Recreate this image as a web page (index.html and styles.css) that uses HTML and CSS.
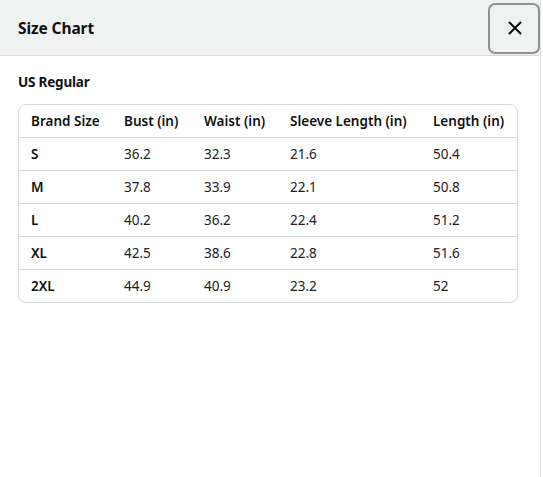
FILE: index.html
```html
<!DOCTYPE html>
<html>
<head>
<meta charset="utf-8">
<link rel="stylesheet" href="styles.css">
</head>
<body>
<div class="modal">
  <header class="modal-header">
    <h1 class="modal-title">Size Chart</h1>
    <button class="close-btn" aria-label="Close">
      <svg width="14" height="14" viewBox="0 0 14 14"><path d="M1.5 1.5 L12.5 12.5 M12.5 1.5 L1.5 12.5" stroke="#0f1111" stroke-width="2" stroke-linecap="round" fill="none"/></svg>
    </button>
  </header>
  <section class="modal-body">
    <h2 class="section-title">US Regular</h2>
    <div class="table-wrap">
      <table class="size-table">
        <colgroup>
          <col class="c1"><col class="c2"><col class="c3"><col class="c4"><col class="c5">
        </colgroup>
        <thead>
          <tr><th>Brand Size</th><th>Bust (in)</th><th>Waist (in)</th><th>Sleeve Length (in)</th><th>Length (in)</th></tr>
        </thead>
        <tbody>
          <tr><th>S</th><td>36.2</td><td>32.3</td><td>21.6</td><td>50.4</td></tr>
          <tr><th>M</th><td>37.8</td><td>33.9</td><td>22.1</td><td>50.8</td></tr>
          <tr><th>L</th><td>40.2</td><td>36.2</td><td>22.4</td><td>51.2</td></tr>
          <tr><th>XL</th><td>42.5</td><td>38.6</td><td>22.8</td><td>51.6</td></tr>
          <tr><th>2XL</th><td>44.9</td><td>40.9</td><td>23.2</td><td>52</td></tr>
        </tbody>
      </table>
    </div>
  </section>
</div>
</body>
</html>
```

FILE: styles.css
```css
html, body {
  margin: 0;
  padding: 0;
  background: #ffffff;
}
body {
  font-family: "Noto Sans", "Open Sans", Arial, sans-serif;
  color: #0f1111;
}
.modal {
  width: 541px;
  height: 477px;
  border-right: 1px solid #e3e6e6;
  box-sizing: border-box;
}
.modal-header {
  height: 56px;
  box-sizing: border-box;
  background: #f0f2f2;
  border-bottom: 1px solid #d5d9d9;
  display: flex;
  align-items: center;
  justify-content: space-between;
  padding: 0 0 0 18px;
}
.modal-title {
  margin: 0;
  font-size: 15.5px;
  font-weight: 700;
  letter-spacing: -0.1px;
}
.close-btn {
  width: 52px;
  height: 51px;
  margin-top: 1px;
  margin-right: 0;
  box-sizing: border-box;
  border: 2px solid #8d9096;
  border-radius: 7px;
  background: #f0f2f2;
  display: flex;
  align-items: center;
  justify-content: center;
  padding: 0 0 0 2px;
}
.modal-body {
  padding: 17px 23px 0 18px;
}
.section-title {
  margin: 0 0 13px 0;
  font-size: 13.5px;
  font-weight: 700;
  line-height: 18px;
  letter-spacing: -0.2px;
}
.table-wrap {
  width: 500px;
  border: 1px solid #d5d9d9;
  border-radius: 8px;
  box-sizing: border-box;
  overflow: hidden;
}
.size-table {
  width: 100%;
  border-collapse: collapse;
  table-layout: fixed;
  font-size: 13.5px;
}
.c1 { width: 93px; }
.c2 { width: 80px; }
.c3 { width: 86px; }
.c4 { width: 143px; }
.c5 { width: auto; }
.size-table th,
.size-table td {
  height: 32px;
  padding: 0 0 0 12px;
  text-align: left;
  vertical-align: middle;
  white-space: nowrap;
}
.size-table th {
  font-weight: 600;
}
.size-table td {
  font-weight: 400;
  color: #222;
}
.size-table tbody tr {
  border-top: 1px solid #d5d9d9;
}
```
